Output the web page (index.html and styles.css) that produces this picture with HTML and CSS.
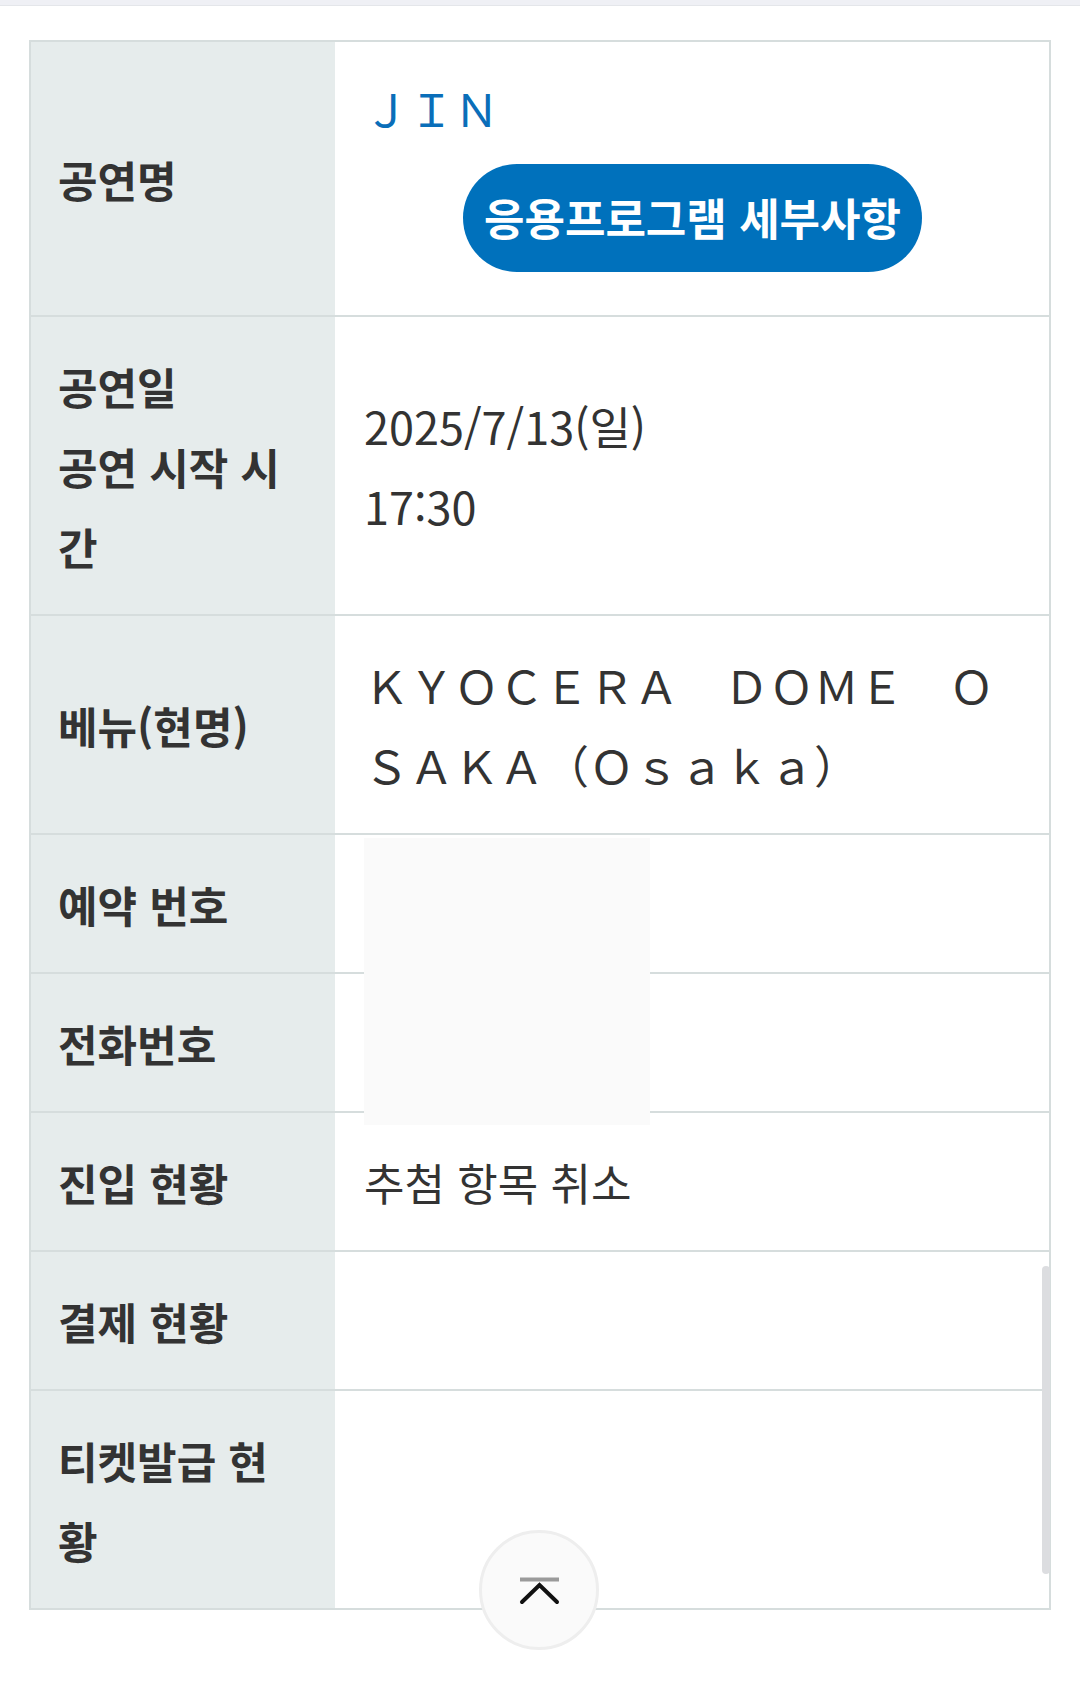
FILE: index.html
```html
<!DOCTYPE html>
<html lang="ko">
<head>
<meta charset="utf-8">
<title>공연 정보</title>
<link rel="stylesheet" href="styles.css">
</head>
<body>
<div class="page">
  <div class="topbar"></div>
  <div class="table">
    <div class="row">
      <div class="label">공연명</div>
      <div class="value value-title">
        <div class="title">ＪＩＮ</div>
        <a class="detail-btn" href="#">응용프로그램 세부사항</a>
      </div>
    </div>
    <div class="row">
      <div class="label">공연일<br>공연 시작 시간</div>
      <div class="value value-date">2025/7/13(일)<br>17:30</div>
    </div>
    <div class="row">
      <div class="label">베뉴(현명)</div>
      <div class="value value-wide">ＫＹＯＣＥＲＡ　ＤＯＭＥ　ＯＳＡＫＡ（Ｏｓａｋａ）</div>
    </div>
    <div class="row">
      <div class="label">예약 번호</div>
      <div class="value"></div>
    </div>
    <div class="row">
      <div class="label">전화번호</div>
      <div class="value"></div>
    </div>
    <div class="row">
      <div class="label">진입 현황</div>
      <div class="value">추첨 항목 취소</div>
    </div>
    <div class="row">
      <div class="label">결제 현황</div>
      <div class="value"></div>
    </div>
    <div class="row">
      <div class="label">티켓발급 현황</div>
      <div class="value"></div>
    </div>
  </div>
  <div class="redact"></div>
  <div class="scrollbar"></div>
  <button class="to-top" type="button" aria-label="맨 위로">
    <svg width="45" height="31" viewBox="0 0 45 31">
      <line x1="3" y1="4.5" x2="42" y2="4.5" stroke="#9a9a9a" stroke-width="4"/>
      <polyline points="5,27 22.5,10 40,27" fill="none" stroke="#111" stroke-width="4" stroke-linecap="round" stroke-linejoin="miter"/>
    </svg>
  </button>
</div>
</body>
</html>
```

FILE: styles.css
```css
html, body {
  margin: 0;
  padding: 0;
  background: #ffffff;
}

.page {
  position: relative;
  width: 1080px;
  min-height: 1685px;
  font-family: "Noto Sans CJK KR", "Noto Sans", sans-serif;
  color: #333333;
}

.topbar {
  height: 5px;
  background: #eff0f5;
  border-bottom: 1px solid #e4e6ea;
}

.table {
  margin: 34px 29px 0;
  border: 2px solid #d6dddd;
}

.row {
  display: grid;
  grid-template-columns: 304px 1fr;
  border-top: 2px solid #d6dddd;
}

.row:first-child {
  border-top: none;
}

.label {
  background: #e6ecec;
  padding: 28.5px 40px 28.5px 27px;
  display: flex;
  align-items: center;
  font-size: 43px;
  font-weight: 700;
  line-height: 80px;
  color: #333333;
  word-break: break-all;
}

.value {
  padding: 28.5px 28px 28.5px 29px;
  display: flex;
  flex-direction: column;
  justify-content: center;
  min-height: 80px;
  font-size: 44px;
  font-weight: 400;
  line-height: 80px;
  color: #333333;
}

.title {
  margin-top: -3px;
  font-size: 45px;
  line-height: 80px;
  color: #0a6eb9;
}

.detail-btn {
  display: block;
  align-self: center;
  width: 459px;
  height: 108px;
  margin: 16px 0 15px;
  border-radius: 54px;
  background: #0071bc;
  color: #ffffff;
  font-size: 44px;
  font-weight: 700;
  line-height: 106px;
  text-align: center;
  text-decoration: none;
  white-space: nowrap;
}

.value-date {
  font-size: 45px;
}

.value-wide {
  font-size: 45px;
  line-height: 80px;
  word-break: break-all;
}

.redact {
  position: absolute;
  left: 364px;
  top: 838px;
  width: 286px;
  height: 287px;
  background: #fafafa;
}

.scrollbar {
  position: absolute;
  left: 1042px;
  top: 1266px;
  width: 8px;
  height: 308px;
  border-radius: 4px;
  background: #dcdde0;
}

.to-top {
  position: absolute;
  left: 479px;
  top: 1530px;
  width: 120px;
  height: 120px;
  padding: 0;
  border: 3px solid #eeeeee;
  border-radius: 50%;
  background: #fafafa;
  display: flex;
  align-items: center;
  justify-content: center;
}
```
